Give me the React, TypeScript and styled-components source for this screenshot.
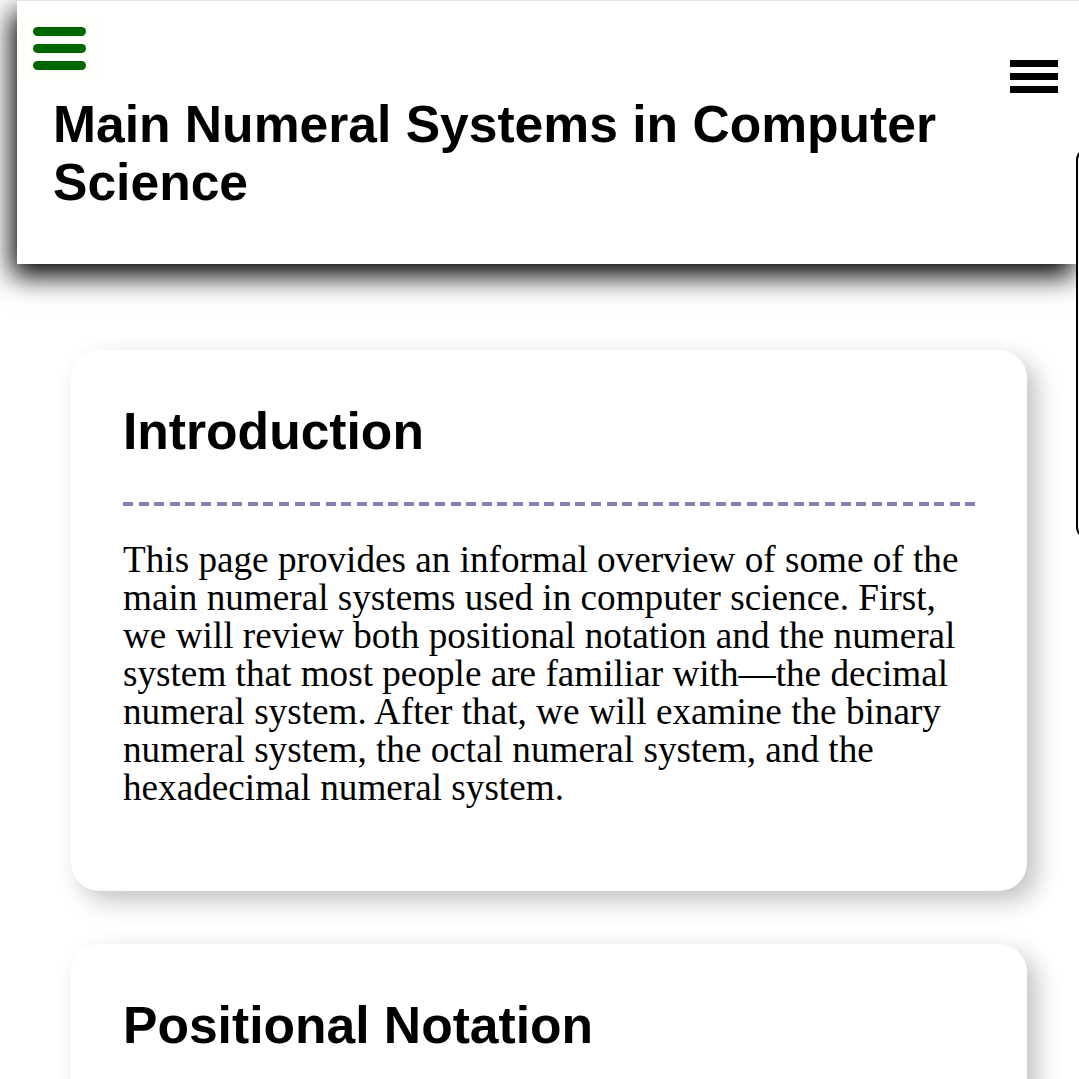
import React from "react";
import styled, { createGlobalStyle } from "styled-components";

const Global = createGlobalStyle`
  html, body {
    margin: 0;
    padding: 0;
    background: #ffffff;
    overflow: hidden;
  }
  body {
    font-family: "Liberation Sans", Arial, sans-serif;
    color: #000;
  }
  * { box-sizing: border-box; }
`;

const Page = styled.div`
  width: 1079px;
  min-height: 1079px;
  position: relative;
`;

const Header = styled.header`
  margin-left: 17px;
  background: #ffffff;
  border-top: 1px solid #e4e4e4;
  box-shadow: -5px 12px 26px #000;
  display: flex;
  align-items: flex-start;
  justify-content: space-between;
  padding: 14px 21px 53px 0;
  position: relative;
  z-index: 2;
`;

const HeaderMain = styled.div`
  display: flex;
  flex-direction: column;
  align-items: flex-start;
  flex: 1;
`;

const NavButton = styled.button`
  width: 83px;
  height: 63px;
  padding: 12px 14px 8px 16px;
  background: #fefffa;
  border: none;
  display: flex;
  flex-direction: column;
  gap: 8px;
  cursor: pointer;
`;

const GreenBar = styled.span`
  display: block;
  width: 53px;
  height: 9px;
  border-radius: 5px;
  background: #006600;
`;

const Title = styled.h1`
  margin: 17px 0 0 36px;
  font-family: "Liberation Sans", Arial, sans-serif;
  font-weight: 700;
  font-size: 51.6px;
  line-height: 58px;
  max-width: 940px;
`;

const MenuButton = styled.button`
  margin-top: 45px;
  width: 48px;
  padding: 0;
  border: none;
  background: transparent;
  display: flex;
  flex-direction: column;
  gap: 6px;
  cursor: pointer;
`;

const BlackBar = styled.span`
  display: block;
  width: 48px;
  height: 7px;
  background: #000;
`;

const SidePanel = styled.aside`
  position: fixed;
  left: 1076px;
  top: 148px;
  width: 60px;
  height: 391px;
  border: 2px solid #000;
  border-radius: 12px;
  background: #fff;
  z-index: 3;
`;

const Main = styled.main`
  display: flex;
  flex-direction: column;
  gap: 53px;
  padding: 86px 52px 40px 71px;
`;

const Card = styled.section`
  background: #ffffff;
  border-radius: 28px;
  padding: 51px 52px 52px;
  box-shadow: 10px 10px 24px rgba(0, 0, 0, 0.24);
`;

const CardTitle = styled.h2`
  margin: 0;
  font-family: "Liberation Sans", Arial, sans-serif;
  font-weight: 700;
  font-size: 51.6px;
  line-height: normal;
`;

const Divider = styled.div`
  margin-top: 41px;
  height: 4px;
  width: 100%;
  background: repeating-linear-gradient(
    to right,
    #8282b8 0px,
    #8282b8 10px,
    transparent 10px,
    transparent 15.6px
  );
`;

const Paragraph = styled.p`
  margin: 35px 0 32px;
  font-family: "Liberation Serif", "Times New Roman", serif;
  font-size: 37.2px;
  line-height: 38px;
  color: #000;
`;

export default function App() {
  return (
    <Page>
      <Global />
      <Header>
        <HeaderMain>
          <NavButton aria-label="Navigation">
            <GreenBar />
            <GreenBar />
            <GreenBar />
          </NavButton>
          <Title>Main Numeral Systems in Computer Science</Title>
        </HeaderMain>
        <MenuButton aria-label="Menu">
          <BlackBar />
          <BlackBar />
          <BlackBar />
        </MenuButton>
      </Header>
      <SidePanel />
      <Main>
        <Card>
          <CardTitle>Introduction</CardTitle>
          <Divider />
          <Paragraph>
            This page provides an informal overview of some of the main numeral
            systems used in computer science. First, we will review both
            positional notation and the numeral system that most people are
            familiar with—the decimal numeral system. After that, we will
            examine the binary numeral system, the octal numeral system, and the
            hexadecimal numeral system.
          </Paragraph>
        </Card>
        <Card>
          <CardTitle>Positional Notation</CardTitle>
          <Divider />
          <Paragraph>
            In positional notation, the value of a digit depends on its position
            within the number.
          </Paragraph>
        </Card>
      </Main>
    </Page>
  );
}
